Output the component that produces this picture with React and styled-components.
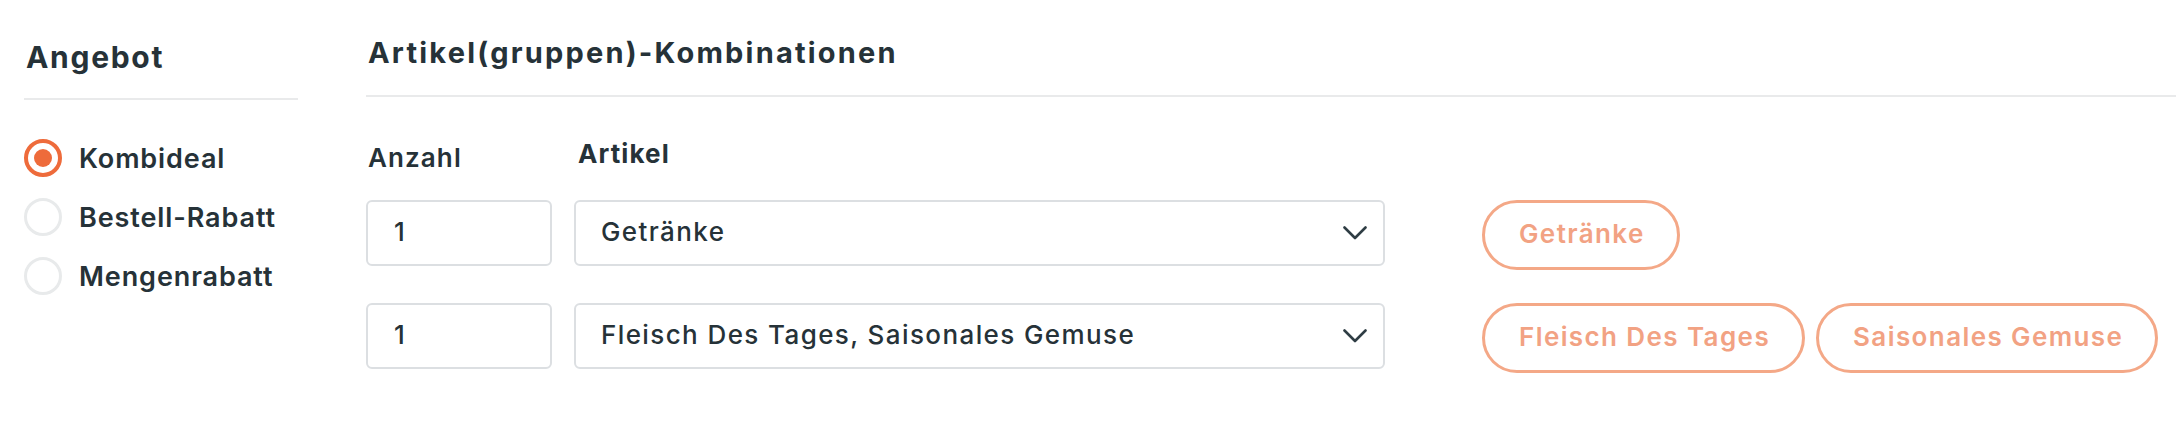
import React from "react";
import styled, { createGlobalStyle } from "styled-components";

const GlobalStyle = createGlobalStyle`
  body {
    margin: 0;
    background: #fff;
    font-family: Inter, "Liberation Sans", sans-serif;
    color: #263238;
  }
`;

const Page = styled.div`
  display: flex;
  gap: 68px;
  padding-left: 24px;
`;

const Sidebar = styled.aside`
  width: 274px;
  flex-shrink: 0;
`;

const SideHeading = styled.h2`
  margin: 0;
  padding: 37px 0 21px 2px;
  font-size: 30px;
  line-height: 40px;
  font-weight: 700;
  letter-spacing: 1.7px;
  border-bottom: 2px solid #e9eaeb;
`;

const RadioList = styled.div`
  display: flex;
  flex-direction: column;
  gap: 21px;
  padding-top: 39px;
`;

const RadioRow = styled.label`
  display: flex;
  align-items: center;
  gap: 17px;
  height: 38px;
  font-size: 27px;
  font-weight: 600;
  letter-spacing: 0.9px;
`;

const RadioCircle = styled.span`
  width: 38px;
  height: 38px;
  box-sizing: border-box;
  border-radius: 50%;
  border: ${(p) => (p.$checked ? "4px solid #ee6b3b" : "3px solid #e8eaeb")};
  display: flex;
  align-items: center;
  justify-content: center;

  &::after {
    content: "";
    display: ${(p) => (p.$checked ? "block" : "none")};
    width: 18px;
    height: 18px;
    border-radius: 50%;
    background: #ee6b3b;
  }
`;

const Main = styled.main`
  flex: 1;
`;

const Title = styled.h2`
  margin: 0;
  padding: 33px 0 22px 2px;
  font-size: 29px;
  line-height: 40px;
  font-weight: 700;
  letter-spacing: 2.2px;
  border-bottom: 2px solid #e9eaeb;
`;

const LabelRow = styled.div`
  display: flex;
  gap: 22px;
  margin-top: 44px;
`;

const ColLabel = styled.div`
  width: ${(p) => p.$width}px;
  font-size: 26px;
  line-height: 34px;
  font-weight: ${(p) => (p.$raised ? 700 : 600)};
  letter-spacing: 1.1px;
  padding-left: 2px;
  margin-top: ${(p) => (p.$raised ? "-4px" : "0")};
`;

const Rows = styled.div`
  display: flex;
  flex-direction: column;
  gap: 33px;
  margin-top: 25px;
`;

const Row = styled.div`
  display: flex;
  align-items: flex-start;
`;

const Field = styled.div`
  box-sizing: border-box;
  height: 66px;
  border: 2px solid #dcdfe2;
  border-radius: 6px;
  display: flex;
  align-items: center;
  font-size: 26px;
  font-weight: 500;
  letter-spacing: 1.4px;
  padding-bottom: 4px;
`;

const Amount = styled(Field)`
  width: 186px;
  padding-left: 26px;
`;

const Select = styled(Field)`
  width: 811px;
  margin-left: 22px;
  padding: 0 16px 4px 25px;
  justify-content: space-between;
`;

const Chevron = styled.svg`
  width: 24px;
  height: 14px;
  margin-top: 4px;
`;

const Chips = styled.div`
  display: flex;
  gap: 11px;
  margin-left: 97px;
`;

const Chip = styled.span`
  box-sizing: border-box;
  height: 70px;
  padding: 0 32px 3px 34px;
  border: 3px solid #f4a887;
  border-radius: 35px;
  display: inline-flex;
  align-items: center;
  font-size: 26px;
  font-weight: 600;
  letter-spacing: 1.4px;
  color: #f2a283;
`;

const offers = [
  { label: "Kombideal", checked: true },
  { label: "Bestell-Rabatt" },
  { label: "Mengenrabatt" },
];

const combos = [
  { amount: 1, items: ["Getränke"] },
  { amount: 1, items: ["Fleisch Des Tages", "Saisonales Gemuse"] },
];

export default function App() {
  return (
    <>
      <GlobalStyle />
      <Page>
        <Sidebar>
          <SideHeading>Angebot</SideHeading>
          <RadioList>
            {offers.map((o) => (
              <RadioRow key={o.label}>
                <RadioCircle $checked={o.checked} />
                {o.label}
              </RadioRow>
            ))}
          </RadioList>
        </Sidebar>
        <Main>
          <Title>Artikel(gruppen)-Kombinationen</Title>
          <LabelRow>
            <ColLabel $width={186}>Anzahl</ColLabel>
            <ColLabel $width={811} $raised>Artikel</ColLabel>
          </LabelRow>
          <Rows>
            {combos.map((c, i) => (
              <Row key={i}>
                <Amount>{c.amount}</Amount>
                <Select>
                  <span>{c.items.join(", ")}</span>
                  <Chevron viewBox="0 0 24 14" fill="none">
                    <polyline points="1.5,1.5 12,12 22.5,1.5" stroke="#2f3d44" strokeWidth="2.6" strokeLinecap="round" strokeLinejoin="round" />
                  </Chevron>
                </Select>
                <Chips>
                  {c.items.map((it) => (
                    <Chip key={it}>{it}</Chip>
                  ))}
                </Chips>
              </Row>
            ))}
          </Rows>
        </Main>
      </Page>
    </>
  );
}
